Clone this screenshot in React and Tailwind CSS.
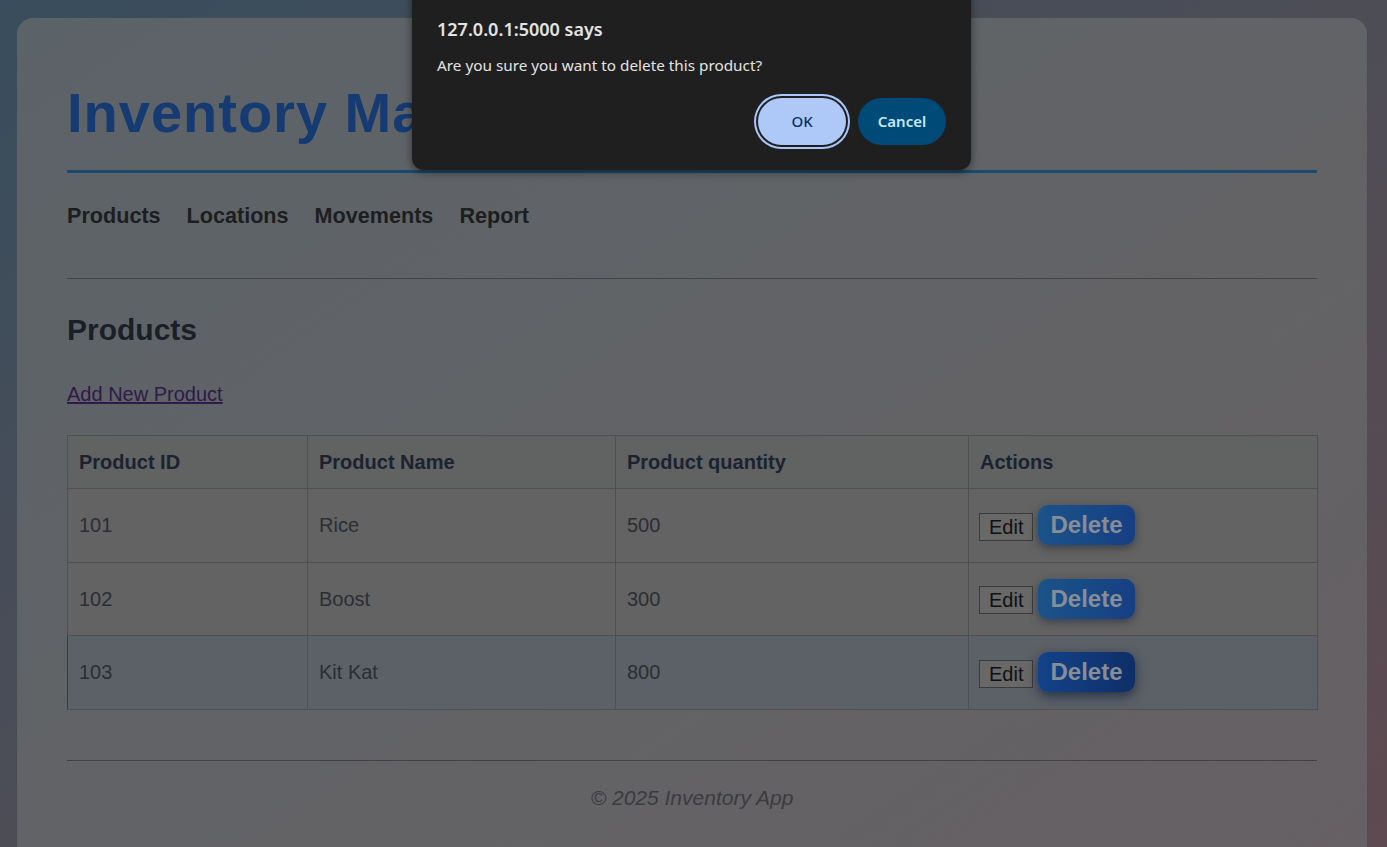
import React from "react";

const products = [
  { id: 101, name: "Rice", qty: 500 },
  { id: 102, name: "Boost", qty: 300 },
  { id: 103, name: "Kit Kat", qty: 800, hover: true },
];

function ConfirmDialog() {
  return (
    <div className="absolute left-[412px] top-[-12px] w-[559px] h-[182px] rounded-[12px] bg-[#1f1f1f] shadow-[0_2px_8px_rgba(0,0,0,0.5)] px-[25px] pt-[29px] font-['Noto_Sans','Open_Sans',sans-serif]">
      <h3 className="text-[18px] leading-[24px] font-semibold text-[#e3e3e3]">127.0.0.1:5000 says</h3>
      <p className="mt-[14px] text-[15.3px] leading-[20px] text-[#e3e3e3]">Are you sure you want to delete this product?</p>
      <div className="mt-[23px] flex justify-end gap-[12px]">
        <button className="w-[88px] h-[47px] rounded-full bg-[#aec9f7] text-[#062e6f] text-[15px] font-medium shadow-[0_0_0_2px_#1f1f1f,0_0_0_4px_#a8c7fa]">
          OK
        </button>
        <button className="w-[88px] h-[47px] rounded-full bg-[#004a77] text-[#c2e7ff] text-[15px] font-semibold">
          Cancel
        </button>
      </div>
    </div>
  );
}

export default function App() {
  return (
    <div className="relative w-full h-[847px] overflow-hidden bg-linear-to-br from-[#384d5d] via-[#4d4d56] to-[#5e4a50] pl-[17px] pr-[20px] pt-[18px] font-['Liberation_Sans',Arial,sans-serif]">
      <div className="h-[900px] rounded-[16px] bg-linear-to-br from-[#5c6368] via-[#626366] to-[#666063] px-[50px] pt-[63px]">
        {/* Header */}
        <h1 className="text-[56px] leading-[64px] font-bold tracking-[1px] text-[#163a72] pb-[25px] border-b-[3px] border-[#1b4a6d]">
          Inventory Management
        </h1>
        <nav className="mt-[31px] flex gap-[26px] text-[21.6px] leading-[24px] font-bold text-[#1d1e20]">
          <a>Products</a>
          <a>Locations</a>
          <a>Movements</a>
          <a>Report</a>
        </nav>
        <hr className="mt-[50px] border-t border-[#414346]" />

        {/* Products */}
        <h2 className="mt-[33px] text-[30px] leading-[35px] font-bold text-[#1a1f28]">Products</h2>
        <a className="mt-[36px] inline-block text-[20px] leading-[23px] text-[#2f1a4a] underline">Add New Product</a>

        <table className="mt-[27px] w-full table-fixed border-collapse text-[20px] text-[#2a2e35]">
          <colgroup>
            <col className="w-[240px]" />
            <col className="w-[308px]" />
            <col className="w-[353px]" />
            <col className="w-[349px]" />
          </colgroup>
          <thead>
            <tr className="h-[53px] bg-[#616262]">
              {["Product ID", "Product Name", "Product quantity", "Actions"].map((h) => (
                <th key={h} className="border border-[#4f5050] px-[11px] text-left font-bold text-[#1b2330]">
                  {h}
                </th>
              ))}
            </tr>
          </thead>
          <tbody>
            {products.map((p) => (
              <tr key={p.id} className={p.hover ? "h-[73.5px] bg-[#5c6168]" : "h-[73.5px] bg-[#636363]"}>
                <td className={p.hover ? "border border-[#4f5050] border-l-[#24405a] px-[11px]" : "border border-[#4f5050] px-[11px]"}>{p.id}</td>
                <td className="border border-[#4f5050] px-[11px]">{p.name}</td>
                <td className="border border-[#4f5050] px-[11px]">{p.qty}</td>
                <td className="border border-[#4f5050] pl-[10px] pr-[11px]">
                  <div className="flex items-center gap-[5px]">
                    <button className="mt-[3px] h-[28px] px-[9px] border border-[#3b3b3b] bg-[#686868] text-[20px] leading-[22px] text-[#111]">
                      Edit
                    </button>
                    <button
                      className={
                        p.hover
                          ? "h-[40px] px-[12px] rounded-[10px] bg-linear-to-r from-[#13438a] to-[#0e2f68] text-[24px] font-bold text-[#878d96] shadow-[0_4px_12px_rgba(15,30,60,0.7)]"
                          : "h-[40px] px-[12px] rounded-[10px] bg-linear-to-r from-[#1b5388] to-[#173f84] text-[24px] font-bold text-[#878d96] shadow-[0_3px_8px_rgba(20,30,50,0.5)]"
                      }
                    >
                      Delete
                    </button>
                  </div>
                </td>
              </tr>
            ))}
          </tbody>
        </table>

        {/* Footer */}
        <footer className="mt-[50px] border-t border-[#404144] pt-[25px] text-center text-[21px] leading-[24px] italic text-[#3a3c40]">
          © 2025 Inventory App
        </footer>
      </div>

      <ConfirmDialog />
    </div>
  );
}
